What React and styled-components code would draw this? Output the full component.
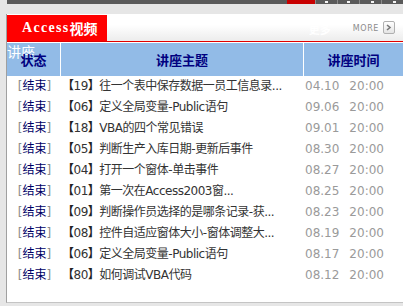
import React from 'react';
import styled, { createGlobalStyle } from 'styled-components';

const GlobalStyle = createGlobalStyle`
  html, body {
    margin: 0;
    padding: 0;
    background: #e6e6e6;
    overflow: hidden;
  }
  body {
    font-family: "DejaVu Sans", "Noto Sans CJK SC", sans-serif;
    font-size: 12px;
  }
`;

const Page = styled.div`
  width: 403px;
  height: 306px;
  overflow: hidden;
`;

const TopStrip = styled.div`
  display: flex;
  height: 4px;
  margin-left: 7px;
  background: #5a5a5a;
`;

const StripFill = styled.div`
  flex: 1;
`;

const StripRed = styled.div`
  width: 28px;
  background: #c80000;
`;

const StripTab = styled.div`
  flex: 0 0 21px;
  border-left: 1px solid #8a8a8a;
  display: flex;
  justify-content: center;
  &::after {
    content: '';
    width: 3px;
    height: 2px;
    margin-top: 1px;
    margin-left: ${({ $shift }) => $shift}px;
    background: #f4f4f4;
  }
`;

const Panel = styled.div`
  position: relative;
  margin: 10px 0 0 6px;
  height: 288px;
  background: #fff;
  border-left: 1px solid #a0a0a0;
  border-bottom: 1px solid #c4c4c4;
`;

const PanelHead = styled.div`
  display: flex;
  align-items: flex-end;
  height: 27px;
  background: linear-gradient(#fff 0%, #fff 40%, #ececec 100%);
  border-bottom: 1px solid #e00000;
`;

const RedTab = styled.div`
  width: 100px;
  height: 26px;
  background: #ff0000;
  color: #fff;
  font-weight: bold;
  display: flex;
  align-items: center;
  padding-left: 15px;
  box-sizing: border-box;
`;

const TabLatin = styled.span`
  font-family: "Liberation Serif", serif;
  font-size: 14px;
  font-weight: bold;
  letter-spacing: 1.3px;
`;

const TabCjk = styled.span`
  font-family: "Noto Sans CJK SC", sans-serif;
  font-size: 14px;
  font-weight: bold;
`;

const HeadRight = styled.div`
  flex: 1;
  height: 27px;
  display: flex;
  align-items: center;
  justify-content: flex-end;
  padding-right: 8px;
`;

const GhostMore = styled.span`
  font-family: "Noto Sans CJK SC", sans-serif;
  font-size: 11px;
  font-weight: bold;
  color: #fff;
  margin-right: 22px;
  margin-top: 2px;
`;

const MoreText = styled.span`
  font-family: "DejaVu Sans", sans-serif;
  font-size: 8px;
  letter-spacing: 0.6px;
  color: #8c8c8c;
  margin-right: 4px;
  margin-top: 1px;
`;

const MoreBox = styled.span`
  width: 10px;
  height: 11px;
  border: 1px solid #b0b0b0;
  border-radius: 2px;
  background: linear-gradient(#fff, #e4e4e4);
  display: flex;
  align-items: center;
  justify-content: center;
`;

const Grid = styled.div`
  display: grid;
  grid-template-columns: 54px 243px 1fr;
  margin-top: 1px;
`;

const HeadCell = styled.div`
  position: relative;
  height: 33px;
  background: #92bbe7;
  color: #000080;
  font-family: "Noto Sans CJK SC", sans-serif;
  font-size: 13px;
  font-weight: bold;
  display: flex;
  align-items: center;
  justify-content: center;
  border-right: ${({ $last }) => ($last ? 'none' : '1px solid #fff')};
`;

const HeadLabel = styled.span`
  position: relative;
  z-index: 1;
`;

const GhostLabel = styled.span`
  position: absolute;
  left: 0;
  top: -2px;
  font-family: "Noto Sans CJK SC", sans-serif;
  font-size: 14px;
  font-weight: normal;
  color: #fff;
`;

const Cell = styled.div`
  height: 21px;
  line-height: 21px;
  white-space: nowrap;
  overflow: hidden;
`;

const StatusCell = styled(Cell)`
  text-align: center;
  color: #000066;
  padding-left: 1px;
`;

const Bracket = styled.span`
  color: #8a8a8a;
`;

const TitleCell = styled(Cell)`
  color: #333;
  padding-left: 1px;
  letter-spacing: -0.5px;
`;

const Num = styled.span`
  color: #222;
  font-weight: bold;
`;

const NumDigits = styled.span`
  font-weight: normal;
  color: #333;
`;

const TimeCell = styled(Cell)`
  color: #9a9a9a;
  display: flex;
  gap: 10px;
  padding-left: 1px;
`;

const rows = [
  ['19', '往一个表中保存数据一员工信息录...', '04.10'],
  ['06', '定义全局变量-Public语句', '09.06'],
  ['18', 'VBA的四个常见错误', '09.01'],
  ['05', '判断生产入库日期-更新后事件', '08.30'],
  ['04', '打开一个窗体-单击事件', '08.27'],
  ['01', '第一次在Access2003窗...', '08.25'],
  ['09', '判断操作员选择的是哪条记录-获...', '08.23'],
  ['08', '控件自适应窗体大小-窗体调整大...', '08.19'],
  ['06', '定义全局变量-Public语句', '08.17'],
  ['80', '如何调试VBA代码', '08.12'],
];

const App = () => (
  <Page>
    <GlobalStyle />
    <TopStrip>
      <StripFill />
      <StripRed />
      <StripTab $shift={0} />
      <StripTab $shift={0} />
      <StripTab $shift={4} />
      <StripTab $shift={4} />
    </TopStrip>

    <Panel>
      <PanelHead>
        <RedTab>
          <TabLatin>Access</TabLatin>
          <TabCjk>视频</TabCjk>
        </RedTab>
        <HeadRight>
          <GhostMore>更多</GhostMore>
          <MoreText>MORE</MoreText>
          <MoreBox>
            <svg width="6" height="7" viewBox="0 0 6 7">
              <path d="M1 1 L4 3.5 L1 6" fill="none" stroke="#777" strokeWidth="1.6" />
            </svg>
          </MoreBox>
        </HeadRight>
      </PanelHead>

      <Grid>
        <HeadCell>
          <GhostLabel>讲座</GhostLabel>
          <HeadLabel>状态</HeadLabel>
        </HeadCell>
        <HeadCell>
          <HeadLabel>讲座主题</HeadLabel>
        </HeadCell>
        <HeadCell $last>
          <HeadLabel>讲座时间</HeadLabel>
        </HeadCell>

        {rows.map(([num, title, date], i) => (
          <React.Fragment key={i}>
            <StatusCell>
              <Bracket>[</Bracket>结束<Bracket>]</Bracket>
            </StatusCell>
            <TitleCell>
              <Num>【<NumDigits>{num}</NumDigits>】</Num>
              {title}
            </TitleCell>
            <TimeCell>
              <span>{date}</span>
              <span>20:00</span>
            </TimeCell>
          </React.Fragment>
        ))}
      </Grid>
    </Panel>
  </Page>
);

export default App;
